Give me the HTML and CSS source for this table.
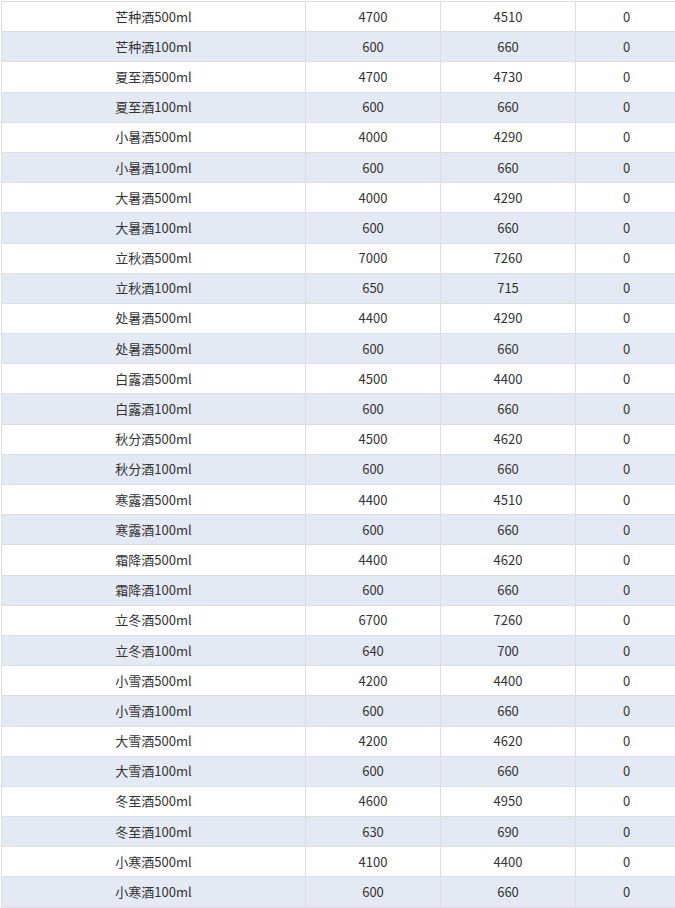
FILE: index.html
```html
<!DOCTYPE html>
<html lang="zh">
<head>
<meta charset="utf-8">
<link rel="stylesheet" href="styles.css">
</head>
<body>
<table class="grid">
<colgroup><col class="c1"><col class="c2"><col class="c3"><col class="c4"></colgroup>
<tbody>
<tr><td>芒种酒500ml</td><td>4700</td><td>4510</td><td>0</td></tr>
<tr><td>芒种酒100ml</td><td>600</td><td>660</td><td>0</td></tr>
<tr><td>夏至酒500ml</td><td>4700</td><td>4730</td><td>0</td></tr>
<tr><td>夏至酒100ml</td><td>600</td><td>660</td><td>0</td></tr>
<tr><td>小暑酒500ml</td><td>4000</td><td>4290</td><td>0</td></tr>
<tr><td>小暑酒100ml</td><td>600</td><td>660</td><td>0</td></tr>
<tr><td>大暑酒500ml</td><td>4000</td><td>4290</td><td>0</td></tr>
<tr><td>大暑酒100ml</td><td>600</td><td>660</td><td>0</td></tr>
<tr><td>立秋酒500ml</td><td>7000</td><td>7260</td><td>0</td></tr>
<tr><td>立秋酒100ml</td><td>650</td><td>715</td><td>0</td></tr>
<tr><td>处暑酒500ml</td><td>4400</td><td>4290</td><td>0</td></tr>
<tr><td>处暑酒500ml</td><td>600</td><td>660</td><td>0</td></tr>
<tr><td>白露酒500ml</td><td>4500</td><td>4400</td><td>0</td></tr>
<tr><td>白露酒100ml</td><td>600</td><td>660</td><td>0</td></tr>
<tr><td>秋分酒500ml</td><td>4500</td><td>4620</td><td>0</td></tr>
<tr><td>秋分酒100ml</td><td>600</td><td>660</td><td>0</td></tr>
<tr><td>寒露酒500ml</td><td>4400</td><td>4510</td><td>0</td></tr>
<tr><td>寒露酒100ml</td><td>600</td><td>660</td><td>0</td></tr>
<tr><td>霜降酒500ml</td><td>4400</td><td>4620</td><td>0</td></tr>
<tr><td>霜降酒100ml</td><td>600</td><td>660</td><td>0</td></tr>
<tr><td>立冬酒500ml</td><td>6700</td><td>7260</td><td>0</td></tr>
<tr><td>立冬酒100ml</td><td>640</td><td>700</td><td>0</td></tr>
<tr><td>小雪酒500ml</td><td>4200</td><td>4400</td><td>0</td></tr>
<tr><td>小雪酒100ml</td><td>600</td><td>660</td><td>0</td></tr>
<tr><td>大雪酒500ml</td><td>4200</td><td>4620</td><td>0</td></tr>
<tr><td>大雪酒100ml</td><td>600</td><td>660</td><td>0</td></tr>
<tr><td>冬至酒500ml</td><td>4600</td><td>4950</td><td>0</td></tr>
<tr><td>冬至酒100ml</td><td>630</td><td>690</td><td>0</td></tr>
<tr><td>小寒酒500ml</td><td>4100</td><td>4400</td><td>0</td></tr>
<tr><td>小寒酒100ml</td><td>600</td><td>660</td><td>0</td></tr>
</tbody>
</table>
</body>
</html>
```

FILE: styles.css
```css
html, body {
  margin: 0;
  padding: 0;
  background: #fff;
  overflow: hidden;
}
body {
  padding: 1px 0 0 1px;
  font-family: "Noto Sans CJK SC", "Noto Sans", sans-serif;
  font-size: 13px;
  color: #333;
}
.grid {
  border-collapse: collapse;
  table-layout: fixed;
  width: 676px;
}
.c1 { width: 304px; }
.c2 { width: 135px; }
.c3 { width: 135px; }
.c4 { width: 102px; }
.grid td {
  border: 1px solid #dcdee2;
  height: 29.2px;
  padding: 0;
  text-align: center;
  vertical-align: middle;
  line-height: 16px;
}
.grid tr:nth-child(even) td {
  background: #e4eaf4;
}
```
